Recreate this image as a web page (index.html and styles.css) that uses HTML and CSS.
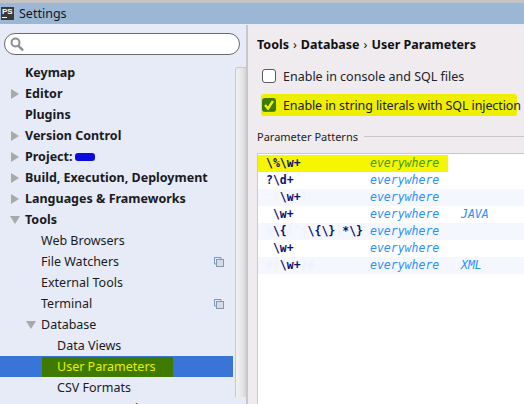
FILE: index.html
```html
<!DOCTYPE html>
<html lang="en">
<head>
<meta charset="utf-8">
<title>Settings</title>
<link rel="stylesheet" href="styles.css">
</head>
<body>
<div class="window">
  <header class="titlebar">
    <span class="app-icon"><span class="app-letters">PS</span><span class="app-rule"></span></span>
    <span class="title">Settings</span>
  </header>
  <div class="main">
    <aside class="sidebar">
      <div class="search">
        <svg class="search-icon" width="14" height="15" viewBox="0 0 14 15"><circle cx="5.5" cy="5.5" r="4" fill="none" stroke="#8f8f8f" stroke-width="2"/><path d="M8.5 8.8 L13 13.3" stroke="#8f8f8f" stroke-width="2.4"/></svg>
      </div>
      <div class="tree-wrap">
        <ul class="tree">
          <li class="row l0 bold">Keymap</li>
          <li class="row l0 bold"><i class="arrow right"></i>Editor</li>
          <li class="row l0 bold">Plugins</li>
          <li class="row l0 bold"><i class="arrow right"></i>Version Control</li>
          <li class="row l0 bold"><i class="arrow right"></i>Project:<span class="blot"></span></li>
          <li class="row l0 bold"><i class="arrow right"></i>Build, Execution, Deployment</li>
          <li class="row l0 bold"><i class="arrow right"></i>Languages &amp; Frameworks</li>
          <li class="row l0 bold"><i class="arrow down"></i>Tools</li>
          <li class="row l1">Web Browsers</li>
          <li class="row l1">File Watchers<svg class="copy" width="10" height="10" viewBox="0 0 10 10"><path d="M2.5 .5H.5V7H2.5M.5 .5H7V2.5" fill="none" stroke="#6c9fc0"/><rect x="2.5" y="2.5" width="7" height="7" fill="#d5dbe6" stroke="#8a98a8"/></svg></li>
          <li class="row l1">External Tools</li>
          <li class="row l1">Terminal<svg class="copy" width="10" height="10" viewBox="0 0 10 10"><path d="M2.5 .5H.5V7H2.5M.5 .5H7V2.5" fill="none" stroke="#6c9fc0"/><rect x="2.5" y="2.5" width="7" height="7" fill="#d5dbe6" stroke="#8a98a8"/></svg></li>
          <li class="row l1"><i class="arrow down"></i>Database</li>
          <li class="row l2">Data Views</li>
          <li class="row l2 selected"><span class="mark">User Parameters</span></li>
          <li class="row l2">CSV Formats</li>
          <li class="row l2">Query Execution</li>
        </ul>
        <div class="scrolltrack"><div class="thumb"></div></div>
      </div>
    </aside>
    <section class="content">
      <h1 class="crumbs">Tools<span class="sep">›</span>Database<span class="sep">›</span>User Parameters</h1>
      <label class="check"><span class="box"></span>Enable in console and SQL files</label>
      <label class="check marked"><span class="box on"><svg width="14" height="14" viewBox="0 0 14 14"><path d="M3 7 L6 10.5 L11 3" fill="none" stroke="#f2f200" stroke-width="2.4"/></svg></span>Enable in string literals with SQL injection</label>
      <div class="group"><span>Parameter Patterns</span><i></i></div>
      <div class="table">
        <div class="pat hl"><b>\%\w+</b><em>everywhere</em></div>
        <div class="pat"><b>?\d+</b><em>everywhere</em></div>
        <div class="pat alt"><b><u>:(</u>\w+<u>)</u></b><em>everywhere</em></div>
        <div class="pat"><b><u> </u>\w+</b><em>everywhere</em><em>JAVA</em></div>
        <div class="pat alt"><b><u>$</u>\{<u>[^$</u>\{\}<u>]</u>*\}</b><em>everywhere</em></div>
        <div class="pat"><b><u> </u>\w+</b><em>everywhere</em></div>
        <div class="pat alt"><b><u>#(</u>\w+<u>)#</u></b><em>everywhere</em><em>XML</em></div>
      </div>
    </section>
  </div>
</div>
</body>
</html>
```
FILE: styles.css
```css
* { box-sizing: border-box; }
html, body { margin: 0; padding: 0; }
body { width: 524px; height: 404px; overflow: hidden; font-family: "Noto Sans", sans-serif; font-size: 12.5px; color: #1a1a22; }
.window { display: flex; flex-direction: column; height: 404px; background: #efebef; border-top: 3px solid #c4c4c4; }
.titlebar { height: 22px; flex: none; display: flex; align-items: center; gap: 5px; padding-left: 1px; background: #9cb6d6; border-bottom: 1px solid #e6ebf7; }
.app-icon { width: 13px; height: 13px; background: #3a3a3a; display: flex; flex-direction: column; align-items: flex-start; padding-left: 1px; color: #fff; }
.app-letters { font-size: 8px; line-height: 9px; font-weight: 700; font-family: "Liberation Sans", sans-serif; }
.app-rule { width: 5px; height: 1px; background: #fff; margin-top: 1px; }
.title { font-size: 12.5px; line-height: 20px; color: #10161f; }
.main { flex: 1; display: flex; min-height: 0; }
.sidebar { width: 248px; flex: none; background: #e6ebf7; border-right: 2px solid #c9c7cc; display: flex; flex-direction: column; overflow: hidden; }
.search { margin: 8px 0 0 4px; width: 236px; height: 22px; flex: none; background: #fff; border: 1px solid #6a6a6a; border-radius: 11px; display: flex; align-items: center; padding-left: 5px; }
.tree-wrap { flex: 1; display: flex; min-height: 0; padding-top: 7px; }
.tree { list-style: none; margin: 0; padding: 0; width: 233px; flex: none; height: 360px; overflow: hidden; }
.row { position: relative; height: 21px; line-height: 21px; font-size: 12.5px; white-space: nowrap; display: flex; align-items: center; }
.l0 { padding-left: 25px; }
.l1 { padding-left: 41px; }
.l2 { padding-left: 57px; }
.bold { font-weight: 700; }
.arrow { position: absolute; width: 0; height: 0; }
.l0 .arrow { left: 11px; }
.l1 .arrow { left: 27px; }
.arrow.right { top: 6px; border-left: 8px solid #a9a9a9; border-top: 5px solid transparent; border-bottom: 5px solid transparent; }
.arrow.down { top: 7px; margin-left: -1px; border-top: 8px solid #a9a9a9; border-left: 5px solid transparent; border-right: 5px solid transparent; }
.blot { width: 20px; height: 8px; margin-left: 2px; background: #0a0adf; border-radius: 3px; }
.copy { position: absolute; left: 214px; top: 6px; }
.selected { background: #3875d7; }
.mark { background: #3f7a00; color: #e8f000; margin-left: -15px; padding: 0 17px 0 15px; height: 20px; line-height: 20px; }
.scrolltrack { width: 13px; flex: none; margin-left: 2px; padding-top: 5px; }
.thumb { height: 330px; border: 1px solid #c8c8cc; border-bottom: 0; border-radius: 3px 3px 0 0; background: linear-gradient(to right, #f2f2f2, #e4e4e4 60%, #cfcfcf); }
.content { flex: 1; min-width: 0; padding: 10px 0 0 9px; overflow: hidden; display: flex; flex-direction: column; align-items: stretch; }
.crumbs { margin: 0; font-size: 12.5px; line-height: 20px; font-weight: 700; color: #111; display: flex; align-items: center; }
.sep { font-weight: 400; margin: 0 4px; }
.check { display: flex; align-items: center; height: 22px; gap: 7px; padding-left: 5px; font-size: 12.5px; white-space: nowrap; color: #20222a; }
.check:first-of-type { margin-top: 10px; }
.check.marked { margin: 7px 0 0 4px; padding-left: 1px; width: 256px; background: #eeee00; border-radius: 3px; letter-spacing: -0.1px; }
.box { width: 14px; height: 14px; flex: none; background: #fff; border: 1px solid #5a5a5a; border-radius: 3px; }
.box.on { background: #3f7a00; border: 0; border-bottom: 1px solid #3a78c8; }
.box svg { display: block; }
.group { display: flex; align-items: center; gap: 6px; margin-top: 10px; height: 20px; font-size: 11px; color: #222; }
.group i { flex: 1; height: 1px; background: #c9c9c9; }
.table { flex: 1; margin-top: 7px; background: #fff; border-top: 1px solid #c9c9c9; border-left: 1px solid #c9c9c9; font-family: "DejaVu Sans Mono", monospace; font-size: 11.5px; }
.pat { height: 17px; line-height: 17px; display: grid; grid-template-columns: 104px 91px auto; padding-left: 8px; white-space: pre; }
.pat:first-child { margin-top: 1px; }
.pat.alt { background: #f5f7ff; }
.pat.hl { background: #f6f600; width: 190px; }
.pat b { color: #10106a; font-weight: 700; }
.pat u { text-decoration: none; color: #f0f2fb; font-weight: 400; }
.pat em { color: #2a8fff; font-style: italic; }
.pat.hl em { color: #3f9a10; }
```
